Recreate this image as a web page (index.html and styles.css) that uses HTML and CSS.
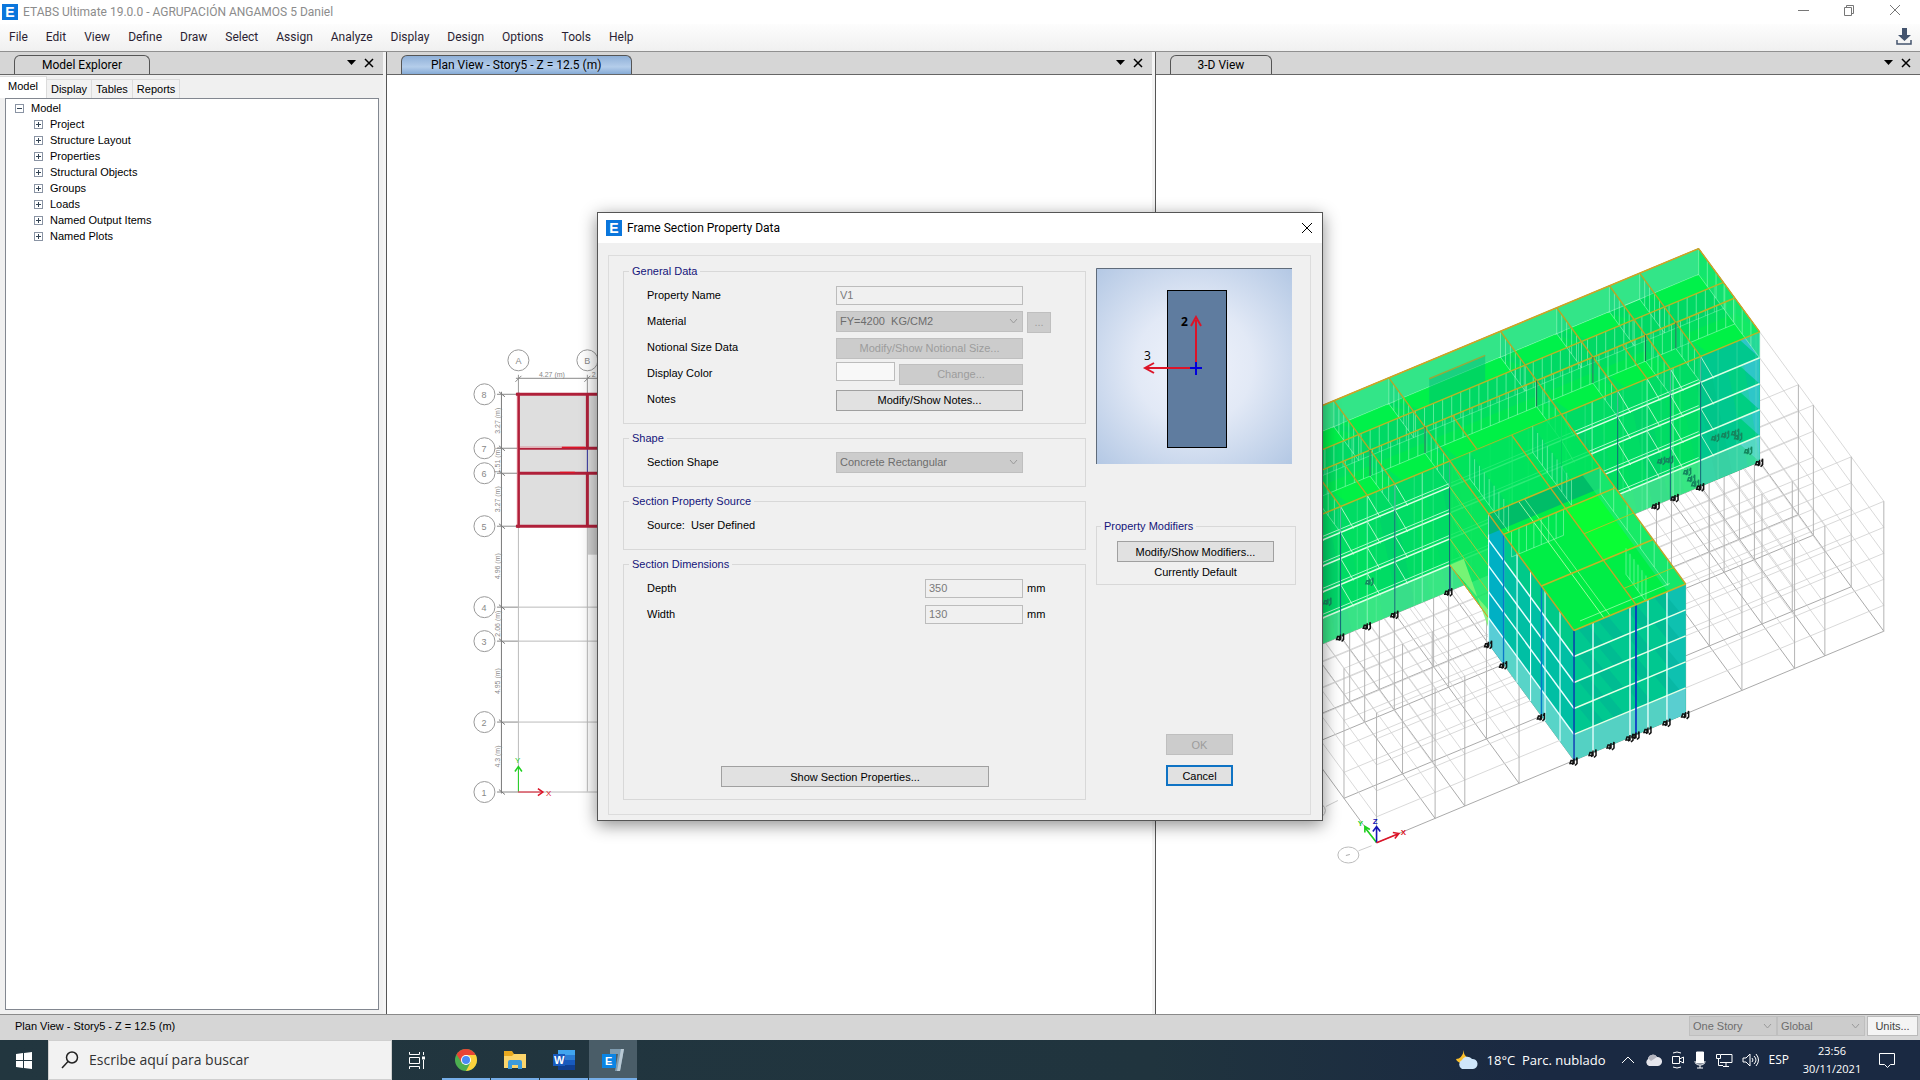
FILE: index.html
```html
<!DOCTYPE html>
<html lang="es">
<head>
    <meta charset="UTF-8">
    <meta name="viewport" content="width=device-width, initial-scale=1.0">
    <title>ETABS Ultimate 19.0.0 - AGRUPACIÓN ANGAMOS 5 Daniel</title>
    <link rel="stylesheet" href="styles.css">
</head>
<body>
    <header class="titlebar">
        <span class="logo">E</span>
        <h1>ETABS Ultimate 19.0.0 - AGRUPACIÓN ANGAMOS 5 Daniel</h1>
        <div class="window-buttons">
            <button aria-label="Minimizar"><svg width="12" height="12"><path d="M1 6.500h11"/></svg></button>
            <button aria-label="Restaurar"><svg width="12" height="12"><path d="M1.500 3.500h7v8h-7zM3.500 3.500v-2h7v8h-2"/></svg></button>
            <button aria-label="Cerrar"><svg width="12" height="12"><path d="M1 1l10 10M11 1L1 11"/></svg></button>
        </div>
    </header>

    <nav class="menubar">
        <a href="#file">File</a>
        <a href="#edit">Edit</a>
        <a href="#view">View</a>
        <a href="#define">Define</a>
        <a href="#draw">Draw</a>
        <a href="#select">Select</a>
        <a href="#assign">Assign</a>
        <a href="#analyze">Analyze</a>
        <a href="#display">Display</a>
        <a href="#design">Design</a>
        <a href="#options">Options</a>
        <a href="#tools">Tools</a>
        <a href="#help">Help</a>
        <button class="download" aria-label="Descargar">
            <svg width="18" height="18"><path d="M7 0h5v7h4l-6.500 6L3 7h4z" fill="#44546e"/><path d="M2 12v4h14v-4" fill="none" stroke="#44546e" stroke-width="1.500"/></svg>
        </button>
    </nav>

    <main class="workspace">
        <section class="pane explorer">
            <div class="pane-header">
                <h2 class="pane-tab">Model Explorer</h2>
                <div class="pane-tools">
                    <button aria-label="Opciones"><svg width="9" height="6"><path d="M0 0h9L4.500 5z"/></svg></button>
                    <button aria-label="Cerrar panel"><svg width="10" height="10"><path d="M1 1l8 8M9 1L1 9" stroke="#000" stroke-width="1.500"/></svg></button>
                </div>
            </div>
            <div class="subtabs">
                <button class="active">Model</button>
                <button>Display</button>
                <button>Tables</button>
                <button>Reports</button>
            </div>
            <div class="tree">
                <div class="tree-root"><span class="toggle minus"></span>Model</div>
                <ul>
                    <li><span class="toggle"></span>Project</li>
                    <li><span class="toggle"></span>Structure Layout</li>
                    <li><span class="toggle"></span>Properties</li>
                    <li><span class="toggle"></span>Structural Objects</li>
                    <li><span class="toggle"></span>Groups</li>
                    <li><span class="toggle"></span>Loads</li>
                    <li><span class="toggle"></span>Named Output Items</li>
                    <li><span class="toggle"></span>Named Plots</li>
                </ul>
            </div>
        </section>

        <section class="pane view">
            <div class="pane-header">
                <h2 class="pane-tab selected">Plan View - Story5 - Z = 12.5 (m)</h2>
                <div class="pane-tools">
                    <button aria-label="Opciones"><svg width="9" height="6"><path d="M0 0h9L4.500 5z"/></svg></button>
                    <button aria-label="Cerrar panel"><svg width="10" height="10"><path d="M1 1l8 8M9 1L1 9" stroke="#000" stroke-width="1.500"/></svg></button>
                </div>
            </div>
            <svg id="plan" class="drawing" viewBox="387 75 765 939" preserveAspectRatio="xMinYMin meet"></svg>
        </section>

        <section class="pane view">
            <div class="pane-header">
                <h2 class="pane-tab">3-D View</h2>
                <div class="pane-tools">
                    <button aria-label="Opciones"><svg width="9" height="6"><path d="M0 0h9L4.500 5z"/></svg></button>
                    <button aria-label="Cerrar panel"><svg width="10" height="10"><path d="M1 1l8 8M9 1L1 9" stroke="#000" stroke-width="1.500"/></svg></button>
                </div>
            </div>
            <svg id="model" class="drawing" viewBox="1156 75 765 939" preserveAspectRatio="xMinYMin meet"></svg>
        </section>
    </main>

    <footer class="statusbar">
        <span>Plan View - Story5 - Z = 12.5 (m)</span>
        <div class="status-controls">
            <select aria-label="Story" disabled><option>One Story</option></select>
            <select aria-label="Coordinate system" disabled><option>Global</option></select>
            <button>Units...</button>
        </div>
    </footer>

    <div class="dialog" role="dialog" aria-labelledby="dialog-title">
        <div class="dialog-title">
            <span class="logo">E</span>
            <h2 id="dialog-title">Frame Section Property Data</h2>
            <button aria-label="Cerrar"><svg width="12" height="12"><path d="M1 1l10 10M11 1L1 11" stroke="#000"/></svg></button>
        </div>
        <form class="dialog-body">
            <div class="column-main">
                <fieldset>
                    <legend>General Data</legend>
                    <div class="row">
                        <label for="name">Property Name</label>
                        <div class="field"><input type="text" id="name" value="V1" disabled></div>
                    </div>
                    <div class="row">
                        <label for="material">Material</label>
                        <div class="field"><select id="material" disabled><option>FY=4200&nbsp; KG/CM2</option></select></div>
                        <button type="button" class="more" disabled>...</button>
                    </div>
                    <div class="row">
                        <label for="notional">Notional Size Data</label>
                        <div class="field"><button type="button" id="notional" disabled>Modify/Show Notional Size...</button></div>
                    </div>
                    <div class="row">
                        <label for="color">Display Color</label>
                        <div class="field"><input type="text" id="color" class="swatch" disabled><button type="button" disabled>Change...</button></div>
                    </div>
                    <div class="row">
                        <label for="notes">Notes</label>
                        <div class="field"><button type="button" id="notes">Modify/Show Notes...</button></div>
                    </div>
                </fieldset>
                <fieldset>
                    <legend>Shape</legend>
                    <div class="row">
                        <label for="shape">Section Shape</label>
                        <div class="field"><select id="shape" disabled><option>Concrete Rectangular</option></select></div>
                    </div>
                </fieldset>
                <fieldset>
                    <legend>Section Property Source</legend>
                    <div class="row">Source:&nbsp; User Defined</div>
                </fieldset>
                <fieldset class="dimensions">
                    <legend>Section Dimensions</legend>
                    <div class="row">
                        <label for="depth">Depth</label>
                        <div class="field short"><input type="text" id="depth" value="350" disabled></div>
                        <span>mm</span>
                    </div>
                    <div class="row">
                        <label for="width">Width</label>
                        <div class="field short"><input type="text" id="width" value="130" disabled></div>
                        <span>mm</span>
                    </div>
                    <button type="button" class="properties">Show Section Properties...</button>
                </fieldset>
            </div>
            <div class="column-side">
                <svg class="section-preview" viewBox="0 0 196 196">
                    <defs>
                        <radialGradient id="sky" cx="0.5" cy="0.5" r="0.75">
                            <stop offset="0" stop-color="#f0f3fb"/>
                            <stop offset="0.4" stop-color="#e2e9f6"/>
                            <stop offset="1" stop-color="#aec4e2"/>
                        </radialGradient>
                    </defs>
                    <rect width="196" height="196" fill="url(#sky)"/>
                    <path d="M0.500 196V0.500H196" fill="none" stroke="#5f6b7a"/>
                    <rect x="71.500" y="22.500" width="59" height="157" fill="#5f7c9f" stroke="#000"/>
                    <path d="M100 94V52M95 58l5-9 5 9M94 100H50M58 95l-9 5 9 5" fill="none" stroke="#dc1428" stroke-width="2"/>
                    <path d="M100 94v13M94 100h12" stroke="#0000dc" stroke-width="2"/>
                    <text x="85" y="58" font-weight="bold">2</text>
                    <text x="48" y="92">3</text>
                </svg>
                <fieldset class="modifiers">
                    <legend>Property Modifiers</legend>
                    <button type="button">Modify/Show Modifiers...</button>
                    <p>Currently Default</p>
                </fieldset>
                <div class="actions">
                    <button type="submit" disabled>OK</button>
                    <button type="button" class="cancel">Cancel</button>
                </div>
            </div>
        </form>
    </div>

    <div class="taskbar">
        <button class="start" aria-label="Inicio">
            <svg width="16" height="18"><path d="M0 3l7-1v7H0zM8 2l8-1v8H8zM0 10h7v7l-7-1zM8 10h8v8l-8-1z" fill="#fff"/></svg>
        </button>
        <label class="search">
            <svg width="18" height="18"><circle cx="11" cy="6.500" r="5.500"/><path d="M7 10.500L1 17"/></svg>
            <input type="text" aria-label="Buscar" placeholder="Escribe aquí para buscar">
        </label>
        <div class="apps">
            <button aria-label="Vista de tareas">
                <svg width="18" height="18" fill="none" stroke="#fff"><path d="M1.500 1v2.500h10V1M1.500 6.500h10v6h-10zM1.500 18v-2.500h10V18M15.500 1v3M15.500 9v9"/><path d="M14 5.500h3v3h-3z" fill="#fff" stroke="none"/></svg>
            </button>
            <button class="open" aria-label="Chrome">
                <svg width="22" height="22" viewBox="0 0 22 22"><circle cx="11" cy="11" r="11" fill="#4caf50"/><path d="M11 11L1.500 5.500A11 11 0 0 1 20.500 5.500z" fill="#e94435"/><path d="M11 6h9.800A11 11 0 0 1 11 22L15.500 13.500z" fill="#fdd23c"/><path d="M1.500 5.500L6.700 13.500 11 11V6z" fill="#e94435"/><circle cx="11" cy="11" r="5" fill="#fff"/><circle cx="11" cy="11" r="4" fill="#4a8af4"/></svg>
            </button>
            <button class="open" aria-label="Explorador">
                <svg width="22" height="20" viewBox="0 0 22 20"><path d="M0 1h8l2 3h12v14H0z" fill="#e9a91f"/><path d="M0 6h8l2-2h12v14H0z" fill="#fcd56b"/><path d="M4 19v-7q0-2 2-2h10q2 0 2 2v7h-4v-4H8v4z" fill="#3d9bdc"/></svg>
            </button>
            <button class="open" aria-label="Word">
                <svg width="24" height="22" viewBox="0 0 24 22"><path d="M6 1h17v5H6z" fill="#41a5ee"/><path d="M6 6h17v5H6z" fill="#2b7cd3"/><path d="M6 11h17v5H6z" fill="#185abd"/><path d="M6 16h17v5H6z" fill="#103f91"/><path d="M1 5h12v12H1z" fill="#185abd"/><text x="2" y="15">W</text></svg>
            </button>
            <button class="open current" aria-label="ETABS">
                <svg width="24" height="24" viewBox="0 0 24 24"><path d="M9 1h14l-4 22h-5l3-17H9z" fill="#7f9cb0"/><path d="M20 1h3l-4 22h-3z" fill="#b9c9d4"/><path d="M1 6h14v14H1z" fill="#0a84e4"/><text x="4" y="17">E</text></svg>
            </button>
        </div>
        <div class="tray">
            <svg width="22" height="20" viewBox="0 0 22 20"><path d="M8 0q-1 6 5 8-2 6-8 5-4-1-5-4 6 0 8-9z" fill="#fbc02d"/><path d="M6 19a5 5 0 0 1 0-9 6 6 0 0 1 10-1 5 5 0 0 1 1 10z" fill="#cfe6fa"/></svg>
            <span class="weather">18°C&nbsp; Parc. nublado</span>
            <svg width="14" height="8" class="line"><path d="M1 7l6-6 6 6"/></svg>
            <svg width="18" height="12" viewBox="0 0 18 12"><path d="M5 12a4 4 0 0 1-1-7 5 5 0 0 1 9-2 4 4 0 0 1 1 9z" fill="#e6e6ec"/><path d="M4 4a5 5 0 0 1 9-1L7 7z" fill="#b4b4be"/></svg>
            <svg width="14" height="18" class="line"><path d="M2 2q4-2 8 0M2 16q4 2 8 0M1.500 5.500h7v7h-7zM8.500 8l4-2v6l-4-2"/></svg>
            <svg width="12" height="18" class="line"><path d="M2.500 1h7v11h-7z" fill="#fff"/><path d="M1 10q0 4 5 4t5-4M6 14v3M3 17h6"/></svg>
            <svg width="18" height="16" class="line"><path d="M6 2.500h11v8H5M1.500 2.500h4v4h-4zM3.500 6.500v7H8M11 11v3M8 14.500h6"/></svg>
            <svg width="18" height="14" class="line"><path d="M1 5h3l4-4v12l-4-4H1zM10 5q2 2 0 4M12 3q4 4 0 8M14 1q5 6 0 12"/></svg>
            <span>ESP</span>
            <div class="clock"><time>23:56</time><time>30/11/2021</time></div>
            <svg width="18" height="17" class="line"><path d="M1.500 1.500h15v11h-4l-3 3-3-3h-5z"/></svg>
        </div>
    </div>

    <script src="script.js"></script>
</body>
</html>
```

FILE: styles.css
```css
* {
    box-sizing: border-box;
}

body {
    display: flex;
    flex-direction: column;
    height: 100vh;
    margin: 0;
    overflow: hidden;
    background: #fff;
    color: #000;
    font: 11px/16px "Liberation Sans", Arial, sans-serif;
}

h1, h2, p {
    margin: 0;
    font-size: inherit;
    font-weight: normal;
}

button, input, select {
    font: inherit;
    color: inherit;
    margin: 0;
}

.logo {
    width: 16px;
    height: 16px;
    background: #0a76dc;
    color: #fff;
    font: bold 14px/16px "Liberation Sans", Arial, sans-serif;
    text-align: center;
}

/* Title and menu */
.titlebar, .menubar, .dialog-title, .pane-tab {
    font-family: Roboto, "Open Sans", sans-serif;
}

.titlebar {
    display: flex;
    align-items: center;
    gap: 5px;
    height: 24px;
    padding-left: 2px;
    color: #8c8c8c;
    font-size: 12px;
}

.window-buttons {
    display: flex;
    margin-left: auto;
    padding-right: 2px;
}

.window-buttons button {
    width: 46px;
    height: 20px;
    padding: 0;
    border: 0;
    background: none;
}

.window-buttons svg {
    fill: none;
    stroke: #777;
}

.menubar {
    display: flex;
    align-items: center;
    gap: 18px;
    height: 27px;
    padding: 0 7px 1px 9px;
    background: linear-gradient(#fdfdfd, #f0f0f0);
    font-size: 12px;
}

.menubar a {
    color: #2b1f33;
    text-decoration: none;
}

.download {
    margin-left: auto;
    padding: 0;
    border: 0;
    background: none;
    height: 18px;
}

/* Panes */
.workspace {
    flex: 1;
    min-height: 0;
    display: grid;
    grid-template-columns: 383px 1fr 1fr;
    gap: 3px;
    border-top: 1px solid #909090;
    background: #f4f4f4;
}

.pane {
    display: flex;
    flex-direction: column;
    min-width: 0;
    min-height: 0;
    background: #fff;
}

.view {
    border-left: 1px solid #555;
}

.pane-header {
    display: flex;
    align-items: flex-end;
    height: 23px;
    padding: 0 9px 0 14px;
    background: #d6d6d6;
    border-bottom: 1px solid #666;
}

.pane-tab {
    height: 19px;
    padding: 0 27px;
    border: 1px solid #555;
    border-bottom: 0;
    border-radius: 6px 6px 0 0;
    font-size: 12px;
    line-height: 18px;
}

.pane-tab.selected {
    padding: 0 30px 0 29px;
    background: linear-gradient(#8fb0d8, #b4cdea 60%, #86abd6);
}

.pane-tools {
    display: flex;
    align-items: center;
    gap: 8px;
    height: 22px;
    margin-left: auto;
}

.pane-tools button {
    display: flex;
    padding: 0;
    border: 0;
    background: none;
}

.explorer {
    background: #f0f0f0;
    padding-bottom: 4px;
}

.subtabs {
    display: flex;
    align-items: flex-end;
    height: 23px;
}

.subtabs button {
    height: 19px;
    padding: 0 4px;
    border: 1px solid #dcdcdc;
    border-width: 1px 1px 0 0;
    background: #f2f2f2;
}

.subtabs .active {
    height: 22px;
    padding: 0 8px 3px;
    background: #fff;
}

.tree {
    flex: 1;
    margin: 0 4px 0 5px;
    padding: 1px 0 0 9px;
    border: 1px solid #828790;
    background: #fff;
}

.tree-root, .tree li {
    display: flex;
    align-items: center;
    gap: 7px;
}

.tree ul {
    margin: 0 0 0 19px;
    padding: 0;
    list-style: none;
}

.toggle {
    width: 9px;
    height: 9px;
    border: 1px solid #8a94a4;
    background:
        linear-gradient(#345, #345) center / 5px 1px no-repeat,
        linear-gradient(#345, #345) center / 1px 5px no-repeat;
}

.toggle.minus {
    background: linear-gradient(#345, #345) center / 5px 1px no-repeat;
}

.drawing {
    flex: 1;
    min-height: 0;
    width: 100%;
    font-family: "Liberation Sans", Arial, sans-serif;
}

/* Status bar */
.statusbar {
    display: flex;
    align-items: center;
    height: 26px;
    padding: 0 2px 3px 15px;
    border-top: 1px solid #8a8a8a;
    background: #d6d6d6;
}

.status-controls {
    display: flex;
    height: 20px;
    margin-left: auto;
    color: #777;
}

.status-controls select {
    width: 88px;
}

.status-controls button {
    width: 51px;
    margin-left: 2px;
    padding: 0;
    border: 1px solid #bbb;
    background: #f4f4f4;
    color: #444;
}

select {
    appearance: none;
    border: 1px solid #bfbfbf;
    border-radius: 0;
    padding: 0 4px 0 3px;
    background: #ccc url("data:image/svg+xml,%3Csvg xmlns='http://www.w3.org/2000/svg' width='9' height='6'%3E%3Cpath d='M1 1l3.500 4 3.500-4' fill='none' stroke='%239a9a9a'/%3E%3C/svg%3E") right 4px center no-repeat;
}

select:disabled {
    opacity: 1;
    color: #6d6d6d;
}

/* Dialog */
.dialog {
    position: absolute;
    left: 597px;
    top: 212px;
    width: 726px;
    border: 1px solid #555;
    background: #f0f0f0;
    box-shadow: 0 4px 16px rgba(0, 0, 0, 0.45);
}

.dialog-title {
    display: flex;
    align-items: center;
    gap: 5px;
    height: 30px;
    padding: 0 9px 0 8px;
    background: #fff;
    font-size: 12px;
}

.dialog-title button {
    display: flex;
    margin-left: auto;
    padding: 0;
    border: 0;
    background: none;
}

.dialog-body {
    display: flex;
    gap: 10px;
    height: 560px;
    margin: 12px 11px 5px 10px;
    padding: 7px 14px 14px;
    border: 1px solid #dcdcdc;
}

.column-main {
    flex: 1;
    display: flex;
    flex-direction: column;
    gap: 6px;
}

fieldset {
    min-width: 0;
    margin: 0;
    padding: 3px 34px 11px 23px;
    border: 1px solid #d8d8d8;
}

legend {
    margin-left: -18px;
    padding: 0 3px;
    color: #14147a;
}

.row {
    display: flex;
    align-items: center;
    gap: 4px;
    height: 26px;
}

.row label {
    margin-right: auto;
}

.field {
    display: flex;
    gap: 4px;
    width: 187px;
    margin-right: 28px;
}

.field:has(+ .more), .field:has(+ span) {
    margin-right: 0;
}

.field.short {
    width: 98px;
}

.field > * {
    flex: 1;
    min-width: 0;
}

.field > .swatch {
    flex: 0 0 59px;
    background: #f8f8f8;
}

.dialog-body input {
    height: 19px;
    padding: 0 3px;
    border: 1px solid #bcbcbc;
    background: #f0f0f0;
    color: #7a7a7a;
}

.dialog-body select {
    height: 21px;
}

.dialog-body button {
    height: 21px;
    padding: 0;
    border: 1px solid #a0a0a0;
    background: #e1e1e1;
}

.dialog-body .row button {
    margin-top: 2px;
}

.dialog-body button:disabled {
    border-color: #bfbfbf;
    background: #ccc;
    color: #9c9c9c;
}

.dialog-body .more {
    width: 24px;
}

.row > span {
    width: 24px;
}

.dimensions {
    flex: 1;
}

.dimensions .properties {
    display: block;
    width: 268px;
    margin: 139px 0 0 74px;
}

.column-side {
    display: flex;
    flex-direction: column;
    width: 200px;
    padding-top: 5px;
}

.section-preview {
    width: 196px;
    height: 196px;
    font-size: 12px;
    font-family: "Open Sans", sans-serif;
}

.modifiers {
    margin-top: 54px;
    padding: 7px 21px 4px 20px;
}

.modifiers legend {
    margin-left: -16px;
}

.modifiers button {
    width: 100%;
}

.modifiers p {
    margin-top: 2px;
    text-align: center;
}

.actions {
    display: flex;
    flex-direction: column;
    gap: 10px;
    width: 67px;
    margin: auto 0 14px 70px;
}

.dialog-body .cancel {
    border: 2px solid #0f73c4;
}

/* Taskbar */
.taskbar {
    display: flex;
    height: 40px;
    background: linear-gradient(90deg, #22363f, #20343e 60%, #1a2942 80%, #1a2942);
    color: #fff;
    font: 12px/22px "Open Sans", "Noto Sans", sans-serif;
}

.taskbar button {
    display: flex;
    align-items: center;
    justify-content: center;
    width: 48px;
    padding: 0;
    border: 0;
    background: none;
}

.search {
    display: flex;
    align-items: center;
    gap: 8px;
    width: 344px;
    padding-left: 12px;
    border: 1px solid #cfcfcf;
    background: #f2f2f2;
}

.search svg {
    fill: none;
    stroke: #222;
    stroke-width: 1.5;
}

.search input {
    flex: 1;
    border: 0;
    outline: 0;
    background: none;
    font-size: 14px;
}

.search input::placeholder {
    color: #333;
}

.apps {
    display: flex;
    gap: 1px;
    margin-left: 1px;
}

.apps text {
    fill: #fff;
    font: bold 11px "Liberation Sans", Arial, sans-serif;
}

.apps .open {
    border-bottom: 2px solid #76aee8;
    border-top: 2px solid transparent;
}

.apps .current {
    background: #4a5d68;
}

.tray {
    display: flex;
    align-items: center;
    gap: 9px;
    margin-left: auto;
    padding-right: 24px;
}

.weather {
    margin-right: 6px;
    font-size: 13px;
}

.line {
    fill: none;
    stroke: #fff;
}

.clock {
    display: flex;
    flex-direction: column;
    align-items: center;
    width: 68px;
    margin-right: 3px;
    font-size: 11px;
    line-height: 18px;
}
```

FILE: script.js
```javascript
const NS = 'http://www.w3.org/2000/svg';

function add(svg, tag, attrs, text) {
    const el = document.createElementNS(NS, tag);
    for (const key in attrs) el.setAttribute(key, attrs[key]);
    if (text) el.textContent = text;
    svg.appendChild(el);
    return el;
}

function line(svg, a, b, stroke, width = 1, opacity = 1) {
    add(svg, 'path', { d: `M${a[0]} ${a[1]}L${b[0]} ${b[1]}`, stroke, 'stroke-width': width, opacity, fill: 'none' });
}

function poly(svg, points, fill, opacity = 1) {
    add(svg, 'polygon', { points: points.map(p => p.join(',')).join(' '), fill, opacity });
}

// ---- Plan view ----
function drawPlan() {
    const svg = document.getElementById('plan');
    const xs = [518.5, 587.5];
    const rows = [['8', 394], ['7', 448], ['6', 473], ['5', 526], ['4', 607], ['3', 641], ['2', 722], ['1', 792]];
    const dims = ['3.27 (m)', '1.51 (m)', '3.27 (m)', '4.96 (m)', '2.06 (m)', '4.95 (m)', '4.3 (m)'];

    add(svg, 'rect', { x: 518, y: 394, width: 100, height: 132, fill: '#dedede' });
    add(svg, 'rect', { x: 588, y: 526, width: 30, height: 29, fill: '#d2d2d2' });

    ['A', 'B'].forEach((name, i) => {
        add(svg, 'circle', { cx: xs[i], cy: 360.5, r: 10.5, fill: 'none', stroke: '#999' });
        add(svg, 'text', { x: xs[i], y: 364, 'font-size': 9, fill: '#888', 'text-anchor': 'middle' }, name);
        line(svg, [xs[i], 375], [xs[i], 394], '#999');
        line(svg, [xs[i], 526], [xs[i], 792], '#bbb');
        line(svg, [xs[i] - 3, 382], [xs[i] + 3, 376], '#888');
    });
    line(svg, [516, 378.5], [620, 378.5], '#888');
    add(svg, 'text', { x: 552, y: 377, 'font-size': 7, fill: '#888', 'text-anchor': 'middle' }, '4.27 (m)');
    add(svg, 'text', { x: 592, y: 377, 'font-size': 7, fill: '#888' }, '2');

    line(svg, [501.5, 392], [501.5, 794], '#777');
    rows.forEach(([name, y], i) => {
        add(svg, 'circle', { cx: 484.5, cy: y + 0.5, r: 10.5, fill: 'none', stroke: '#999' });
        add(svg, 'text', { x: 484, y: y + 4, 'font-size': 9, fill: '#888', 'text-anchor': 'middle' }, name);
        line(svg, [497, y + 0.5], [518, y + 0.5], '#888');
        line(svg, [499, y - 2], [505, y + 3], '#777');
        if (i > 3) line(svg, [518, y + 0.5], [620, y + 0.5], '#bbb');
        if (dims[i]) {
            const mid = (y + rows[i + 1][1]) / 2;
            add(svg, 'text', { x: 500, y: mid, 'font-size': 7, fill: '#888', 'text-anchor': 'middle', transform: `rotate(-90 500 ${mid})` }, dims[i]);
        }
    });

    line(svg, [587.5, 448], [587.5, 473], '#2b2b9c');
    const beams = [
        [[516, 394.500], [620, 394.500]], [[518, 448.500], [620, 448.500]],
        [[518, 473.500], [620, 473.500]], [[516, 526.500], [620, 526.500]],
        [[518.500, 393], [518.500, 528]], [[587.500, 394], [587.500, 448]], [[587.500, 473], [587.500, 526]]
    ];
    beams.forEach(([a, b]) => line(svg, a, b, '#b0203a', 3));
    line(svg, [517.5, 396], [517.5, 525], '#f0a0a8', 1, 0.6);
    line(svg, [520, 447.5], [562, 447.5], '#f6e0e0');
    line(svg, [562, 447.5], [585, 447.5], '#f01020');
    line(svg, [560, 472.5], [575, 472.5], '#f01020');

    line(svg, [518.5, 792], [518.5, 768], '#1fd01f');
    add(svg, 'path', { d: 'M515 772l3.500-5 3.500 5', fill: 'none', stroke: '#1fd01f', 'stroke-width': 1.5 });
    line(svg, [518, 792.5], [542, 792.5], '#dc1428');
    add(svg, 'path', { d: 'M538 789l5 3.500-5 3.500', fill: 'none', stroke: '#dc1428', 'stroke-width': 1.5 });
    add(svg, 'text', { x: 515, y: 763, 'font-size': 8, fill: '#1fd01f' }, 'Y');
    add(svg, 'text', { x: 546, y: 796, 'font-size': 8, fill: '#dc1428' }, 'X');
}

// ---- 3-D view ----
const gx = [0, 58.6, 88.3, 142.6, 197.6, 309.3, 365.6, 418.3, 448.6, 507.6];
const gy = [0, 32.6, 70.5, 85.5, 124.3, 149.1, 160.5, 185.3];
const E = gx[4], F = gx[5], J = gx[9];

// x along the front, y to the back, z in stories
function P(x, y, z) {
    return [+(1376.7 + x - y).toFixed(1), +(843.3 - x * 0.417 - y * 1.365 - z * 26).toFixed(1)];
}

function support(svg, [x, y], color = '#111') {
    add(svg, 'path', { d: `M${x - 4} ${y + 3}h3v-3h-2zM${x} ${y - 2}v5l-2 1M${x + 2} ${y}l1-3v6l-2 2`, fill: 'none', stroke: color, 'stroke-width': 1.5 });
}

function wall(svg, a, b, z, fill, opacity, step) {
    const [x1, y1] = a, [x2, y2] = b;
    poly(svg, [P(x1, y1, z), P(x2, y2, z), P(x2, y2, z - 1), P(x1, y1, z - 1)], fill, opacity);
    const n = Math.max(1, Math.round((Math.abs(x2 - x1) + Math.abs(y2 - y1)) / step));
    for (let i = 0; i <= n; i++) {
        const x = x1 + (x2 - x1) * i / n, y = y1 + (y2 - y1) * i / n;
        line(svg, P(x, y, z), P(x, y, z - 1), '#b4ffcf', 1, 0.5);
    }
    line(svg, P(x1, y1, z - 1), P(x2, y2, z - 1), '#b4ffcf', 1, 0.5);
}

function drawGrid(svg) {
    for (let z = 0; z <= 5; z++) {
        const color = z ? '#cfcfcf' : '#aaa';
        gx.forEach(x => line(svg, P(x, 0, z), P(x, gy[7], z), color, 1, z ? 0.8 : 1));
        gy.forEach(y => line(svg, P(0, y, z), P(J, y, z), color, 1, z ? 0.8 : 1));
    }
    gx.forEach(x => gy.forEach(y => line(svg, P(x, y, 0), P(x, y, 5), '#b4b4b4')));
}

function drawMain(svg) {
    const y5 = gy[4], y6 = gy[5], y7 = gy[6], y8 = gy[7];

    // front face
    poly(svg, [P(0, y5, 0), P(J, y5, 0), P(J, y5, 5), P(0, y5, 5)], '#00dc64');
    poly(svg, [P(gx[8], y5, 0), P(J, y5, 0), P(J, y5, 5), P(gx[8], y5, 5)], '#00c88e');
    const k = P(J, y5, 0);
    for (let z = 0; z < 5; z++) {
        const top = P(J, y5, z + 1);
        poly(svg, [top, [top[0], top[1] + 26], [top[0] - 20, top[1] + 8]], '#2ec6c8');
    }
    for (let i = 1; i < 16; i++) {
        const x = J * i / 16;
        poly(svg, [P(x, y5, 4), P(x + 16, y5, 4), P(x + 36, y5, 0), P(x + 20, y5, 0)].map(([a, b]) => [Math.min(a, k[0]), b]), i % 2 ? '#00f050' : '#00b878', 0.18);
    }
    poly(svg, [P(0, y5, 0), P(J, y5, 0), P(J, y5, 1), P(0, y5, 1)], '#fff', 0.22);

    // story lines and infill diagonals
    for (let z = 1; z < 5; z++) {
        line(svg, P(0, y5, z), P(J, y5, z), '#dcffe4', 1.5);
        line(svg, P(0, y5 + 2, z), P(gx[8], y5 + 2, z), '#dcffe4', 1, 0.8);
        gx.slice(1).concat([30, 115, 395]).forEach(x => {
            const a = P(x, y5, z + 1), b = [a[0] + 13, a[1] + 22];
            if (b[0] < k[0]) line(svg, a, b, '#d2ffdc', 1, 0.8);
        });
    }
    [30, 115, 170, 260, 340, 395, 421].forEach(x => line(svg, P(x, y5, 0), P(x, y5, 5), '#a0f5c8', 1, 0.8));
    for (let x = 10; x < J; x += 19) line(svg, P(x, y5, 0), P(x, y5, 5), '#a0f5c8', 1, 0.25);
    gx.slice(0, 9).forEach(x => line(svg, P(x, y5, 0), P(x, y5, 5), '#146478'));
    line(svg, P(E, y5, 0), P(E, y5, 5), '#1e5080', 1.5);

    // roof and the rooms below it
    poly(svg, [P(0, y5, 5), P(J, y5, 5), P(J, y8, 5), P(0, y8, 5)], '#00e65a');
    poly(svg, [P(0, y8, 5), P(J, y8, 5), P(J, y8, 4), P(0, y8, 4)], '#33e588');
    line(svg, P(0, y8, 4), P(J, y8, 4), '#b4ffcf', 1, 0.8);
    gx.forEach((x, i) => {
        if (i === 9) return;
        const n = gx[i + 1];
        if (n - x > 40) {
            poly(svg, [P(x + 6, y8, 4), P(n - 2, y8, 4), P(n - 2, y7, 5), P(x + 6, y7, 5)], '#00f446', 0.8);
            poly(svg, [P(x + 8, y6, 4.4), P(n, y6, 4.4), P(n, y5, 5), P(x + 8, y5, 5)], '#00f83c', 0.65);
        }
    });
    wall(svg, [0, y7], [J, y7], 5, '#00b482', 0.25, 9);
    wall(svg, [0, y6], [J, y6], 5, '#00c86e', 0.25, 9);
    [0, 2, 3, 4, 5, 6, 7, 8].forEach(i => {
        wall(svg, [gx[i], y8], [gx[i], y7], 5, '#00c878', 0.3, 5);
        wall(svg, [gx[i], y6], [gx[i], y5], 5, '#00d278', 0.3, 6);
    });
    wall(svg, [J, y8], [J, y5], 5, '#1ee678', 0.6, 9);
    poly(svg, [P(228, y8 - 10, 5), P(284, y8 - 10, 5), P(284, y8 - 10, 4), P(228, y8 - 10, 4)], '#00be78', 0.5);
    line(svg, P(228, y8 - 10, 5), P(284, y8 - 10, 5), '#96aa3c', 1.5);

    [y5, y6, y7, y8].forEach(y => line(svg, P(0, y, 5), P(J, y, 5), '#b9b428', 1.5));
    gx.concat([25, 115, 225, 395]).forEach((x, i) => line(svg, P(x, i > 9 ? y6 : y8, 5), P(x, y5, 5), '#b4a828', 1.4));
    gx.slice(0, 9).forEach(x => line(svg, P(x, y6, 5), P(x, y6, 4), '#146450'));
    line(svg, P(0, y8, 5), P(J, y8, 5), '#d79b28');
    line(svg, P(J, y8, 5), P(J, y5, 5), '#d79b28');

    const hidden = [[1716, 437], [1726, 434], [1736, 432], [1739, 436], [1749, 450], [1688, 471], [1692, 478], [1696, 483], [1370, 581], [1328, 601], [1662, 460], [1670, 459]];
    hidden.forEach(p => support(svg, p, '#14875f'));
    [0, 15, 30, 58.6, 88.3, 115, 142.6, E - 1, 404, 423, gx[8], J].forEach(x => support(svg, P(x, y5, 0)));
}

function drawTower(svg) {
    const y3 = gy[2], y4 = gy[3], y5 = gy[4];

    // link slabs between the blocks
    poly(svg, [P(E, y5, 1), P(E, y4, 1), P(E, y4, 5), P(E, y5, 5)], '#0ae65a', 0.85);
    poly(svg, [P(E, y5, 1), P(E + 14, y5, 1), P(E, y4, 0.6), P(E, y4, 1.3)], '#82f578', 0.9);
    for (let z = 1; z < 5; z++) line(svg, P(E, y5, z), P(E, y4, z), '#a8c83c');
    line(svg, P(E, y5, 1), P(E, y4, 1), '#d79b28');

    // left face
    poly(svg, [P(E, 0, 0), P(E, y4, 0), P(E, y4, 5), P(E, 0, 5)], '#00bfa4');
    poly(svg, [P(E, y3, 0), P(E, y4, 0), P(E, y4, 5), P(E, y3, 5)], '#00b0c4');
    poly(svg, [P(E, 29, 0), P(E, 33, 0), P(E, 33, 5), P(E, 29, 5)], '#00b4c8', 0.7);
    poly(svg, [P(E, 0, 4), P(E, y3, 4), P(E, y3, 5), P(E, 0, 5)], '#00d278', 0.6);
    poly(svg, [P(E, 0, 0), P(E, y4, 0), P(E, y4, 1), P(E, 0, 1)], '#a0e6e6', 0.55);

    // front face
    poly(svg, [P(E, 0, 0), P(F, 0, 0), P(F, 0, 5), P(E, 0, 5)], '#00c890');
    poly(svg, [P(F - 18, 0, 0), P(F, 0, 0), P(F, 0, 5), P(F - 18, 0, 5)], '#14bebe', 0.7);
    poly(svg, [P(E, 0, 0), P(F, 0, 0), P(F, 0, 1), P(E, 0, 1)], '#8cd7e6', 0.6);
    for (let z = 1; z < 5; z++) {
        [E + 4, E + 24, E + 52, E + 80].forEach(x => {
            poly(svg, [P(x, 0, z + 1), P(x + 16, 0, z), P(x + 26, 0, z), P(x + 10, 0, z + 1)], '#00aa96', 0.4);
        });
    }

    for (let z = 1; z < 5; z++) {
        line(svg, P(E, 0, z), P(E, y4, z), '#e6ffff', 1.4);
        line(svg, P(E, 0, z), P(F, 0, z), '#e6ffe6', 1.4);
    }
    [y4, y3, 57, 43.5, 29, 14].forEach(y => line(svg, P(E, y, 0), P(E, y, 5), '#e6ffff', 1.1));
    [19, 56, 74, 93].forEach(x => line(svg, P(E + x, 0, 0), P(E + x, 0, 5), '#f0ffff', 1.3));
    [y3, gy[1]].forEach(y => line(svg, P(E, y, 0), P(E, y, 5), '#0a78c8', 1.4));
    line(svg, P(E, 0, 0), P(E, 0, 5), '#0a28b4', 1.3);
    line(svg, P(E + 62, 0, 0), P(E + 62, 0, 5), '#0a28c8', 1.6);

    // roof
    poly(svg, [P(E, 0, 5), P(F, 0, 5), P(F, y4, 5), P(E, y4, 5)], '#00ee46');
    poly(svg, [P(E, y4, 5), P(F, y4, 5), P(F, y5, 5), P(E, y5, 5)], '#00e65a', 0.8);
    poly(svg, [P(E, y4, 5), P(F, y4, 5), P(F, y4, 4.2), P(E, y4, 4.2)], '#00b46e', 0.85);
    poly(svg, [P(E + 62, gy[1], 5), P(F, gy[1], 5), P(F, y3, 5), P(E + 62, y3, 5)], '#0aff32', 0.9);
    poly(svg, [P(F, 0, 5), P(F, y4, 5), P(F - 18, y4, 5), P(F - 18, 0, 5)], '#1ee678', 0.7);
    wall(svg, [E + 20, y4], [E + 20, y5], 5, '#00c878', 0.3, 5);
    wall(svg, [E + 83, y4], [E + 83, y5], 5, '#00c878', 0.3, 5);
    wall(svg, [E + 8, y3], [E + 60, y3], 5, '#00dc6e', 0.3, 8);
    wall(svg, [F, y4], [F, 18], 5, '#1ee678', 0.2, 13);
    wall(svg, [E + 86, 34], [E + 86, 14], 5, '#1ee678', 0.2, 4);
    line(svg, P(E + 10, 4, 5), P(F - 12, 4, 5), '#b4ffb4', 1, 0.7);
    line(svg, P(E + 30, y4, 5), P(E + 30, 0, 5), '#c8ffb4', 1, 0.8);
    line(svg, P(E + 36, y4, 5), P(E + 36, 0, 5), '#c8ffb4', 1, 0.6);
    [E, E + 62, F].forEach(x => line(svg, P(x, 0, 5), P(x, y5, 5), '#c3a428', 1.4));
    [0, gy[1], y3, y4].forEach(y => line(svg, P(E, y, 5), P(F, y, 5), '#c3b428', 1.5));
    [12, 52].forEach(y => line(svg, P(E + 62, y, 5), P(F, y, 5), '#a8c828'));

    [y4, y3, gy[1], 0].forEach(y => support(svg, P(E, y, 0)));
    [19, 37, 56, 62, 74, 93, 111.7].forEach(x => support(svg, P(E + x, 0, 0)));
}

function drawAxes(svg) {
    const o = P(0, 0, 0);
    line(svg, [o[0] - 5, o[1] + 3], [o[0] - 18, o[1] + 8], '#ccc');
    add(svg, 'ellipse', { cx: 1348.5, cy: 855.5, rx: 10.5, ry: 8, fill: 'none', stroke: '#bbb' });
    line(svg, [1346, 856], [1350, 855], '#aaa');
    add(svg, 'ellipse', { cx: 1315, cy: 811, rx: 10.5, ry: 8, fill: 'none', stroke: '#bbb' });
    line(svg, [1326, 807], [1338, 801], '#ccc');
    const arrows = [
        ['#1fd01f', 'M1376.700 843L1365 828M1365 833v-6l5 3', 1358, 826, 'Y'],
        ['#1414b4', 'M1376.700 843V828M1373 832l3.700-5 3.700 5', 1373, 824, 'Z'],
        ['#dc1428', 'M1376.700 843.300L1398 834.500M1393 833l6 1-4 5', 1401, 835, 'X']
    ];
    arrows.forEach(([color, d, x, y, name]) => {
        add(svg, 'path', { d, fill: 'none', stroke: color, 'stroke-width': 1.6 });
        add(svg, 'text', { x, y, 'font-size': 8, 'font-weight': 'bold', fill: color }, name);
    });
}

const model = document.getElementById('model');
drawPlan();
drawGrid(model);
drawMain(model);
drawTower(model);
drawAxes(model);
```
